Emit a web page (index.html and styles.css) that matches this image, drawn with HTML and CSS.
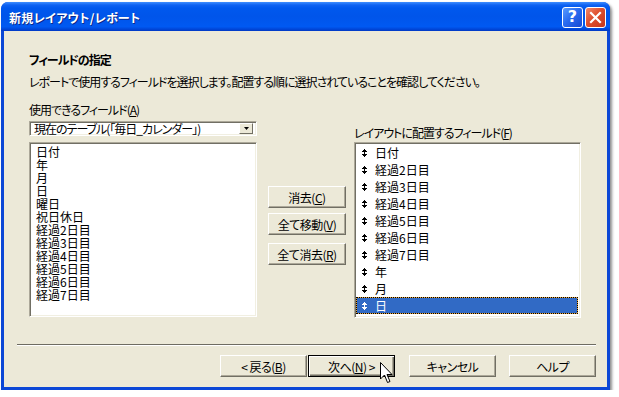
FILE: index.html
```html
<!DOCTYPE html>
<html lang="ja">
<head>
<meta charset="utf-8">
<title>新規レイアウト/レポート</title>
<link rel="stylesheet" href="styles.css">
</head>
<body>
<div class="window">
  <div class="titlebar">
    <span class="title">新規レイアウト/レポート</span>
    <div class="tbtns">
      <div class="tbtn help">?</div>
      <div class="tbtn close">
        <svg width="13" height="13" viewBox="0 0 13 13"><path d="M2 2 L11 11 M11 2 L2 11" stroke="#fff" stroke-width="2.2" stroke-linecap="square"/></svg>
      </div>
    </div>
  </div>
  <div class="client">
    <div class="intro">
      <div class="heading">フィールドの指定</div>
      <div class="desc">レポートで使用するフィールドを選択します。配置する順に選択されていることを確認してください。</div>
    </div>
    <div class="main">
      <div class="col col-left">
        <div class="label">使用できるフィールド(<u>A</u>)</div>
        <div class="combo">
          <span class="combo-text">現在のテーブル(「毎日_カレンダー」)</span>
          <span class="drop"><svg width="5" height="3" viewBox="0 0 5 3"><path d="M0 0 H5 L2.5 3 Z" fill="#000"/></svg></span>
        </div>
        <ul class="list list-left">
          <li>日付</li>
          <li>年</li>
          <li>月</li>
          <li>日</li>
          <li>曜日</li>
          <li>祝日休日</li>
          <li>経過2日目</li>
          <li>経過3日目</li>
          <li>経過4日目</li>
          <li>経過5日目</li>
          <li>経過6日目</li>
          <li>経過7日目</li>
        </ul>
      </div>
      <div class="mid">
        <div class="btn">消去(<u>C</u>)</div>
        <div class="btn">全て移動(<u>V</u>)</div>
        <div class="btn btn-gap">全て消去(<u>R</u>)</div>
      </div>
      <div class="col col-right">
        <div class="label">レイアウトに配置するフィールド(<u>F</u>)</div>
        <ul class="list list-right">
          <li><svg class="mv" width="5" height="8" viewBox="0 0 5 8"><path d="M2 0h1v1h1v1h1v1H3v2h2v1H4v1H3v1H2V7H1V6H0V5h2V3H0V2h1V1h1z" fill="#000"/></svg><span>日付</span></li>
          <li><svg class="mv" width="5" height="8" viewBox="0 0 5 8"><path d="M2 0h1v1h1v1h1v1H3v2h2v1H4v1H3v1H2V7H1V6H0V5h2V3H0V2h1V1h1z" fill="#000"/></svg><span>経過2日目</span></li>
          <li><svg class="mv" width="5" height="8" viewBox="0 0 5 8"><path d="M2 0h1v1h1v1h1v1H3v2h2v1H4v1H3v1H2V7H1V6H0V5h2V3H0V2h1V1h1z" fill="#000"/></svg><span>経過3日目</span></li>
          <li><svg class="mv" width="5" height="8" viewBox="0 0 5 8"><path d="M2 0h1v1h1v1h1v1H3v2h2v1H4v1H3v1H2V7H1V6H0V5h2V3H0V2h1V1h1z" fill="#000"/></svg><span>経過4日目</span></li>
          <li><svg class="mv" width="5" height="8" viewBox="0 0 5 8"><path d="M2 0h1v1h1v1h1v1H3v2h2v1H4v1H3v1H2V7H1V6H0V5h2V3H0V2h1V1h1z" fill="#000"/></svg><span>経過5日目</span></li>
          <li><svg class="mv" width="5" height="8" viewBox="0 0 5 8"><path d="M2 0h1v1h1v1h1v1H3v2h2v1H4v1H3v1H2V7H1V6H0V5h2V3H0V2h1V1h1z" fill="#000"/></svg><span>経過6日目</span></li>
          <li><svg class="mv" width="5" height="8" viewBox="0 0 5 8"><path d="M2 0h1v1h1v1h1v1H3v2h2v1H4v1H3v1H2V7H1V6H0V5h2V3H0V2h1V1h1z" fill="#000"/></svg><span>経過7日目</span></li>
          <li><svg class="mv" width="5" height="8" viewBox="0 0 5 8"><path d="M2 0h1v1h1v1h1v1H3v2h2v1H4v1H3v1H2V7H1V6H0V5h2V3H0V2h1V1h1z" fill="#000"/></svg><span>年</span></li>
          <li><svg class="mv" width="5" height="8" viewBox="0 0 5 8"><path d="M2 0h1v1h1v1h1v1H3v2h2v1H4v1H3v1H2V7H1V6H0V5h2V3H0V2h1V1h1z" fill="#000"/></svg><span>月</span></li>
          <li class="selected"><svg class="mv" width="5" height="8" viewBox="0 0 5 8"><path d="M2 0h1v1h1v1h1v1H3v2h2v1H4v1H3v1H2V7H1V6H0V5h2V3H0V2h1V1h1z" fill="#fff"/></svg><span>日</span></li>
        </ul>
      </div>
    </div>
    <div class="footer">
      <div class="sep"></div>
      <div class="btnrow">
        <div class="btn fbtn">&lt;&nbsp;戻る(<u>B</u>)</div>
        <div class="btn fbtn focused">次へ(<u>N</u>)&nbsp;&gt;</div>
        <div class="btn fbtn gap-l">キャンセル</div>
        <div class="btn fbtn gap-l2">ヘルプ</div>
      </div>
    </div>
  </div>
  <svg class="cursor" width="13" height="22" viewBox="0 0 13 22"><path d="M0.5 0.5 L0.5 17 L4.5 13 L7.5 20.5 L10 19.5 L7 12.5 L12 12.5 Z" fill="#fff" stroke="#000" stroke-width="1" stroke-linejoin="miter"/></svg>
</div>
</body>
</html>
```

FILE: styles.css
```css
* { box-sizing: border-box; }

body {
  margin: 0;
  background: #fff;
  font-family: "Noto Sans CJK JP", "Noto Sans", sans-serif;
  font-size: 12px;
  color: #000;
  font-feature-settings: "palt";
}

u { text-decoration: underline; text-underline-offset: 1px; }

.window {
  position: relative;
  margin: 2px 0 0 1px;
  width: 609px;
  height: 388px;
  background: #0B47D6;
  border-radius: 7px 7px 0 0;
  box-shadow: 2px 2px 3px rgba(0, 0, 0, 0.45);
  display: flex;
  flex-direction: column;
  padding: 0 3px 3px;
}

.titlebar {
  height: 29px;
  margin: 0 -3px;
  padding: 1px 0 0 8px;
  display: flex;
  align-items: center;
  border-radius: 7px 7px 0 0;
  background: linear-gradient(#3E8EFF 0, #0F62F2 3px, #0058EE 6px, #0055EA 50%, #0059F2 85%, #0046D8 94%, #0038C4 100%);
}

.title {
  color: #fff;
  font-weight: bold;
  font-size: 12px;
  letter-spacing: 0.3px;
  text-shadow: 1px 1px 0 #0A2A8C;
}

.tbtns {
  margin-left: auto;
  margin-right: 4px;
  display: flex;
  gap: 2px;
}

.tbtn {
  width: 21px;
  height: 21px;
  border: 1px solid #fff;
  border-radius: 3px;
  display: flex;
  align-items: center;
  justify-content: center;
  color: #fff;
}

.help {
  background: linear-gradient(135deg, #5A9CFF 0%, #2A6CF0 45%, #1848D2 100%);
  font-family: "DejaVu Sans", sans-serif;
  font-weight: bold;
  font-size: 16px;
  line-height: 1;
}

.close {
  background: linear-gradient(135deg, #F2896A 0%, #DE4F2E 45%, #C5361C 100%);
}

.client {
  flex: 1;
  background: #ECE9D8;
  display: flex;
  flex-direction: column;
}

.intro {
  padding: 22px 0 0 25px;
}

.heading {
  font-weight: bold;
  line-height: 14px;
  letter-spacing: -1px;
}

.desc {
  margin-top: 8px;
  line-height: 14px;
  letter-spacing: -1px;
}

.main {
  margin-top: 14px;
  padding-left: 25px;
  display: flex;
  align-items: flex-start;
}

.col { display: flex; flex-direction: column; }

.col-left { width: 228px; }

.label {
  line-height: 14px;
  white-space: nowrap;
  letter-spacing: -1px;
}

.combo {
  margin-top: 4px;
  height: 15px;
  background: #fff;
  border: 1px solid;
  border-color: #ACA899 #fff #fff #ACA899;
  box-shadow: inset 1px 1px 0 #716F64, inset -1px -1px 0 #F1EFE2;
  display: flex;
  align-items: center;
  padding: 0 3px 0 4px;
}

.combo-text {
  line-height: 11px;
  white-space: nowrap;
  letter-spacing: -1px;
}

.drop {
  margin-left: auto;
  width: 14px;
  height: 11px;
  background: #ECE9D8;
  border: 1px solid;
  border-color: #fff #716F64 #716F64 #fff;
  display: flex;
  align-items: center;
  justify-content: center;
}

.list {
  list-style: none;
  margin: 6px 0 0;
  background: #fff;
  border: 1px solid;
  border-color: #ACA899 #fff #fff #ACA899;
  box-shadow: inset 1px 1px 0 #716F64, inset -1px -1px 0 #F1EFE2;
}

.list-left {
  height: 175px;
  padding: 2px 0 0 6px;
}

.list-left li {
  line-height: 13px;
}

.mid {
  width: 78px;
  margin: 83px 0 0 11px;
  display: flex;
  flex-direction: column;
  gap: 5px;
}

.mid .btn-gap { margin-top: 3px; }

.btn {
  height: 22px;
  background: #ECE9D8;
  border: 1px solid;
  border-color: #fff #716F64 #716F64 #fff;
  box-shadow: inset -1px -1px 0 #ACA899;
  display: flex;
  align-items: center;
  justify-content: center;
  white-space: nowrap;
  letter-spacing: -0.5px;
}

.col-right {
  width: 227px;
  margin: 23px 0 0 8px;
}

.list-right {
  height: 176px;
  margin-top: 2px;
  padding: 1px 2px 0 1px;
}

.list-right li {
  height: 17px;
  display: flex;
  align-items: center;
  padding-left: 6px;
}

.mv { flex: none; margin-right: 8px; }

.list-right li.selected {
  color: #fff;
  border: 1px dotted #000;
  padding-left: 5px;
  background: linear-gradient(#316AC5, #316AC5) padding-box, #E9A53A border-box;
}

.footer {
  margin-top: 26px;
  padding: 0 11px 0 13px;
}

.sep {
  height: 2px;
  border-top: 1px solid #6E6C62;
  border-bottom: 1px solid #fff;
}

.btnrow {
  margin-top: 9px;
  display: flex;
  justify-content: flex-end;
}

.fbtn { width: 87px; }

.fbtn.focused {
  margin-left: 1px;
  border: 1px solid #000;
  box-shadow: inset 1px 1px 0 #fff, inset -1px -1px 0 #716F64, inset -2px -2px 0 #ACA899;
}

.gap-l { margin-left: 14px; }
.gap-l2 { margin-left: 13px; }

.cursor {
  position: absolute;
  left: 379px;
  top: 360px;
}
```
